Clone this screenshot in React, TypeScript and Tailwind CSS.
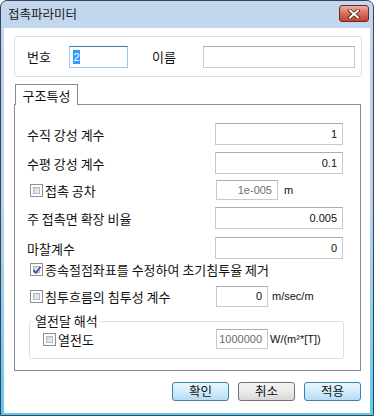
import React from "react";

const num = "font-['Liberation_Sans',Arial,sans-serif] text-[11px]";

const Check = ({ checked = false }: { checked?: boolean }) => (
  <div className="relative w-[13px] h-[13px] border border-[#8e8f8f] bg-white p-[2px] shrink-0">
    <div className="w-full h-full border border-[#b4b8bd] bg-gradient-to-br from-[#cfd3d8] to-[#f4f5f6]" />
    {checked && (
      <svg className="absolute left-[1px] top-[1px]" width="10" height="10" viewBox="0 0 10 10">
        <path d="M1.5 5.2 L4 7.8 L8.6 1.8" fill="none" stroke="#3b54a3" strokeWidth="1.8" />
      </svg>
    )}
  </div>
);

const Field = ({ value, className, dim = false }: { value: string; className: string; dim?: boolean }) => (
  <div
    className={`flex items-center justify-end pr-[5px] bg-white border border-[#c6cad0] border-t-[#a9adb3] ${num} ${
      dim ? "text-[#6d6d6d]" : "text-[#111]"
    } ${className}`}
  >
    {value}
  </div>
);

const Btn = ({ label, blue = false }: { label: string; blue?: boolean }) => (
  <button
    className={`w-[57px] h-[19px] rounded-[3px] border text-[12.5px] leading-none text-[#111] ${
      blue
        ? "border-[#3c7fb1] bg-gradient-to-b from-[#e9f6fd] via-[#d2ecfb] to-[#b6dcf4]"
        : "border-[#707070] bg-gradient-to-b from-[#f4f4f4] via-[#ebebeb] to-[#d8d8d8]"
    }`}
  >
    {label}
  </button>
);

export default function App() {
  return (
    <div className="w-[374px] h-[416px] flex flex-col rounded-t-[7px] border border-[#34455b] bg-gradient-to-b from-[#c3d7ee] via-[#b9d1ea] to-[#5cc9ef] overflow-hidden font-['Noto_Sans_CJK_KR','Noto_Sans',sans-serif] text-[#111]">
      <div className="h-[27px] shrink-0 flex items-start justify-between pl-[7px] pr-[4px]">
        <span className="mt-[7px] text-[12.5px] leading-none text-[#1b1b1b]">접촉파라미터</span>
        <div className="mt-[4px] w-[30px] h-[17px] rounded-[3px] border border-[#6e2a21] bg-gradient-to-b from-[#eab0a2] via-[#d66f5b] to-[#c2432d] flex items-center justify-center">
          <svg width="14" height="10" viewBox="0 0 14 10">
            <path d="M3 1.5 L11 8.5 M11 1.5 L3 8.5" stroke="#4a1a14" strokeWidth="3.6" strokeLinecap="square" />
            <path d="M3 1.5 L11 8.5 M11 1.5 L3 8.5" stroke="#ffffff" strokeWidth="2" strokeLinecap="square" />
          </svg>
        </div>
      </div>

      <div className="flex-1 mx-[3px] mb-[2px] bg-white flex flex-col pl-[10px] pt-[8px]">
        <div className="w-[348px] h-[41px] border border-[#d5dfe5] rounded-[3px] flex items-center pl-[12px] text-[13px]">
          <span className="w-[42px] leading-none">번호</span>
          <div className="w-[59px] h-[22px] border border-[#9cc6ea] border-t-[#3d7bad] flex items-center pl-[3px]">
            <span className={`bg-[#3399ff] text-white leading-[14px] px-[0.5px] ${num}`}>2</span>
          </div>
          <span className="ml-[24px] w-[51px] leading-none">이름</span>
          <div className="w-[152px] h-[22px] border border-[#c6cad0] border-t-[#a9adb3]" />
        </div>

        <div className="mt-[7px] ml-[1px] w-[63px] h-[21px] -mb-px relative z-10 bg-white border border-b-0 border-[#898c95] flex items-center justify-center text-[13px] leading-none">
          구조특성
        </div>
        <div className="w-[347px] h-[267px] border border-[#898c95] flex flex-col pl-[12px] pt-[18px] text-[13px] leading-none">
          <div className="h-[22px] flex items-center">
            <span className="w-[188px]">수직 강성 계수</span>
            <Field value="1" className="w-[128px] h-[22px]" />
          </div>
          <div className="mt-[7px] h-[22px] flex items-center">
            <span className="w-[188px]">수평 강성 계수</span>
            <Field value="0.1" className="w-[128px] h-[22px]" />
          </div>
          <div className="mt-[6px] h-[20px] flex items-center">
            <div className="w-[189px] flex items-center pl-[3px]">
              <Check />
              <span className="ml-[2px]">접촉 공차</span>
            </div>
            <Field value="1e-005" dim className="w-[62px] h-[20px]" />
            <span className={`ml-[6px] ${num}`}>m</span>
          </div>
          <div className="mt-[7px] h-[22px] flex items-center">
            <span className="w-[188px]">주 접촉면 확장 비율</span>
            <Field value="0.005" className="w-[128px] h-[22px]" />
          </div>
          <div className="mt-[8px] h-[22px] flex items-center">
            <span className="w-[188px]">마찰계수</span>
            <Field value="0" className="w-[128px] h-[22px]" />
          </div>
          <div className="mt-[2px] h-[16px] flex items-center pl-[3px]">
            <Check checked />
            <span className="ml-[2px]">종속절점좌표를 수정하여 초기침투율 제거</span>
          </div>
          <div className="mt-[9px] h-[21px] flex items-center">
            <div className="w-[189px] flex items-center pl-[3px]">
              <Check />
              <span className="ml-[2px]">침투흐름의 침투성 계수</span>
            </div>
            <Field value="0" className="w-[52px] h-[21px]" />
            <span className={`ml-[4px] ${num}`}>m/sec/m</span>
          </div>
          <fieldset className="mt-[7px] ml-[2px] w-[315px] border border-[#d5dfe5] rounded-[3px] pb-[9px]">
            <legend className="ml-[3px] px-[2px] leading-[14px]">열전달 해석</legend>
            <div className="mt-[1px] h-[20px] flex items-center">
              <div className="w-[186px] flex items-center pl-[13px]">
                <Check />
                <span className="ml-[2px]">열전도</span>
              </div>
              <Field value="1000000" dim className="w-[52px] h-[20px]" />
              <span className={`ml-[2px] ${num}`}>W/(m²*[T])</span>
            </div>
          </fieldset>
        </div>

        <div className="mt-[11px] w-[347px] flex justify-end gap-[9px]">
          <Btn label="확인" blue />
          <Btn label="취소" />
          <Btn label="적용" blue />
        </div>
      </div>
    </div>
  );
}
